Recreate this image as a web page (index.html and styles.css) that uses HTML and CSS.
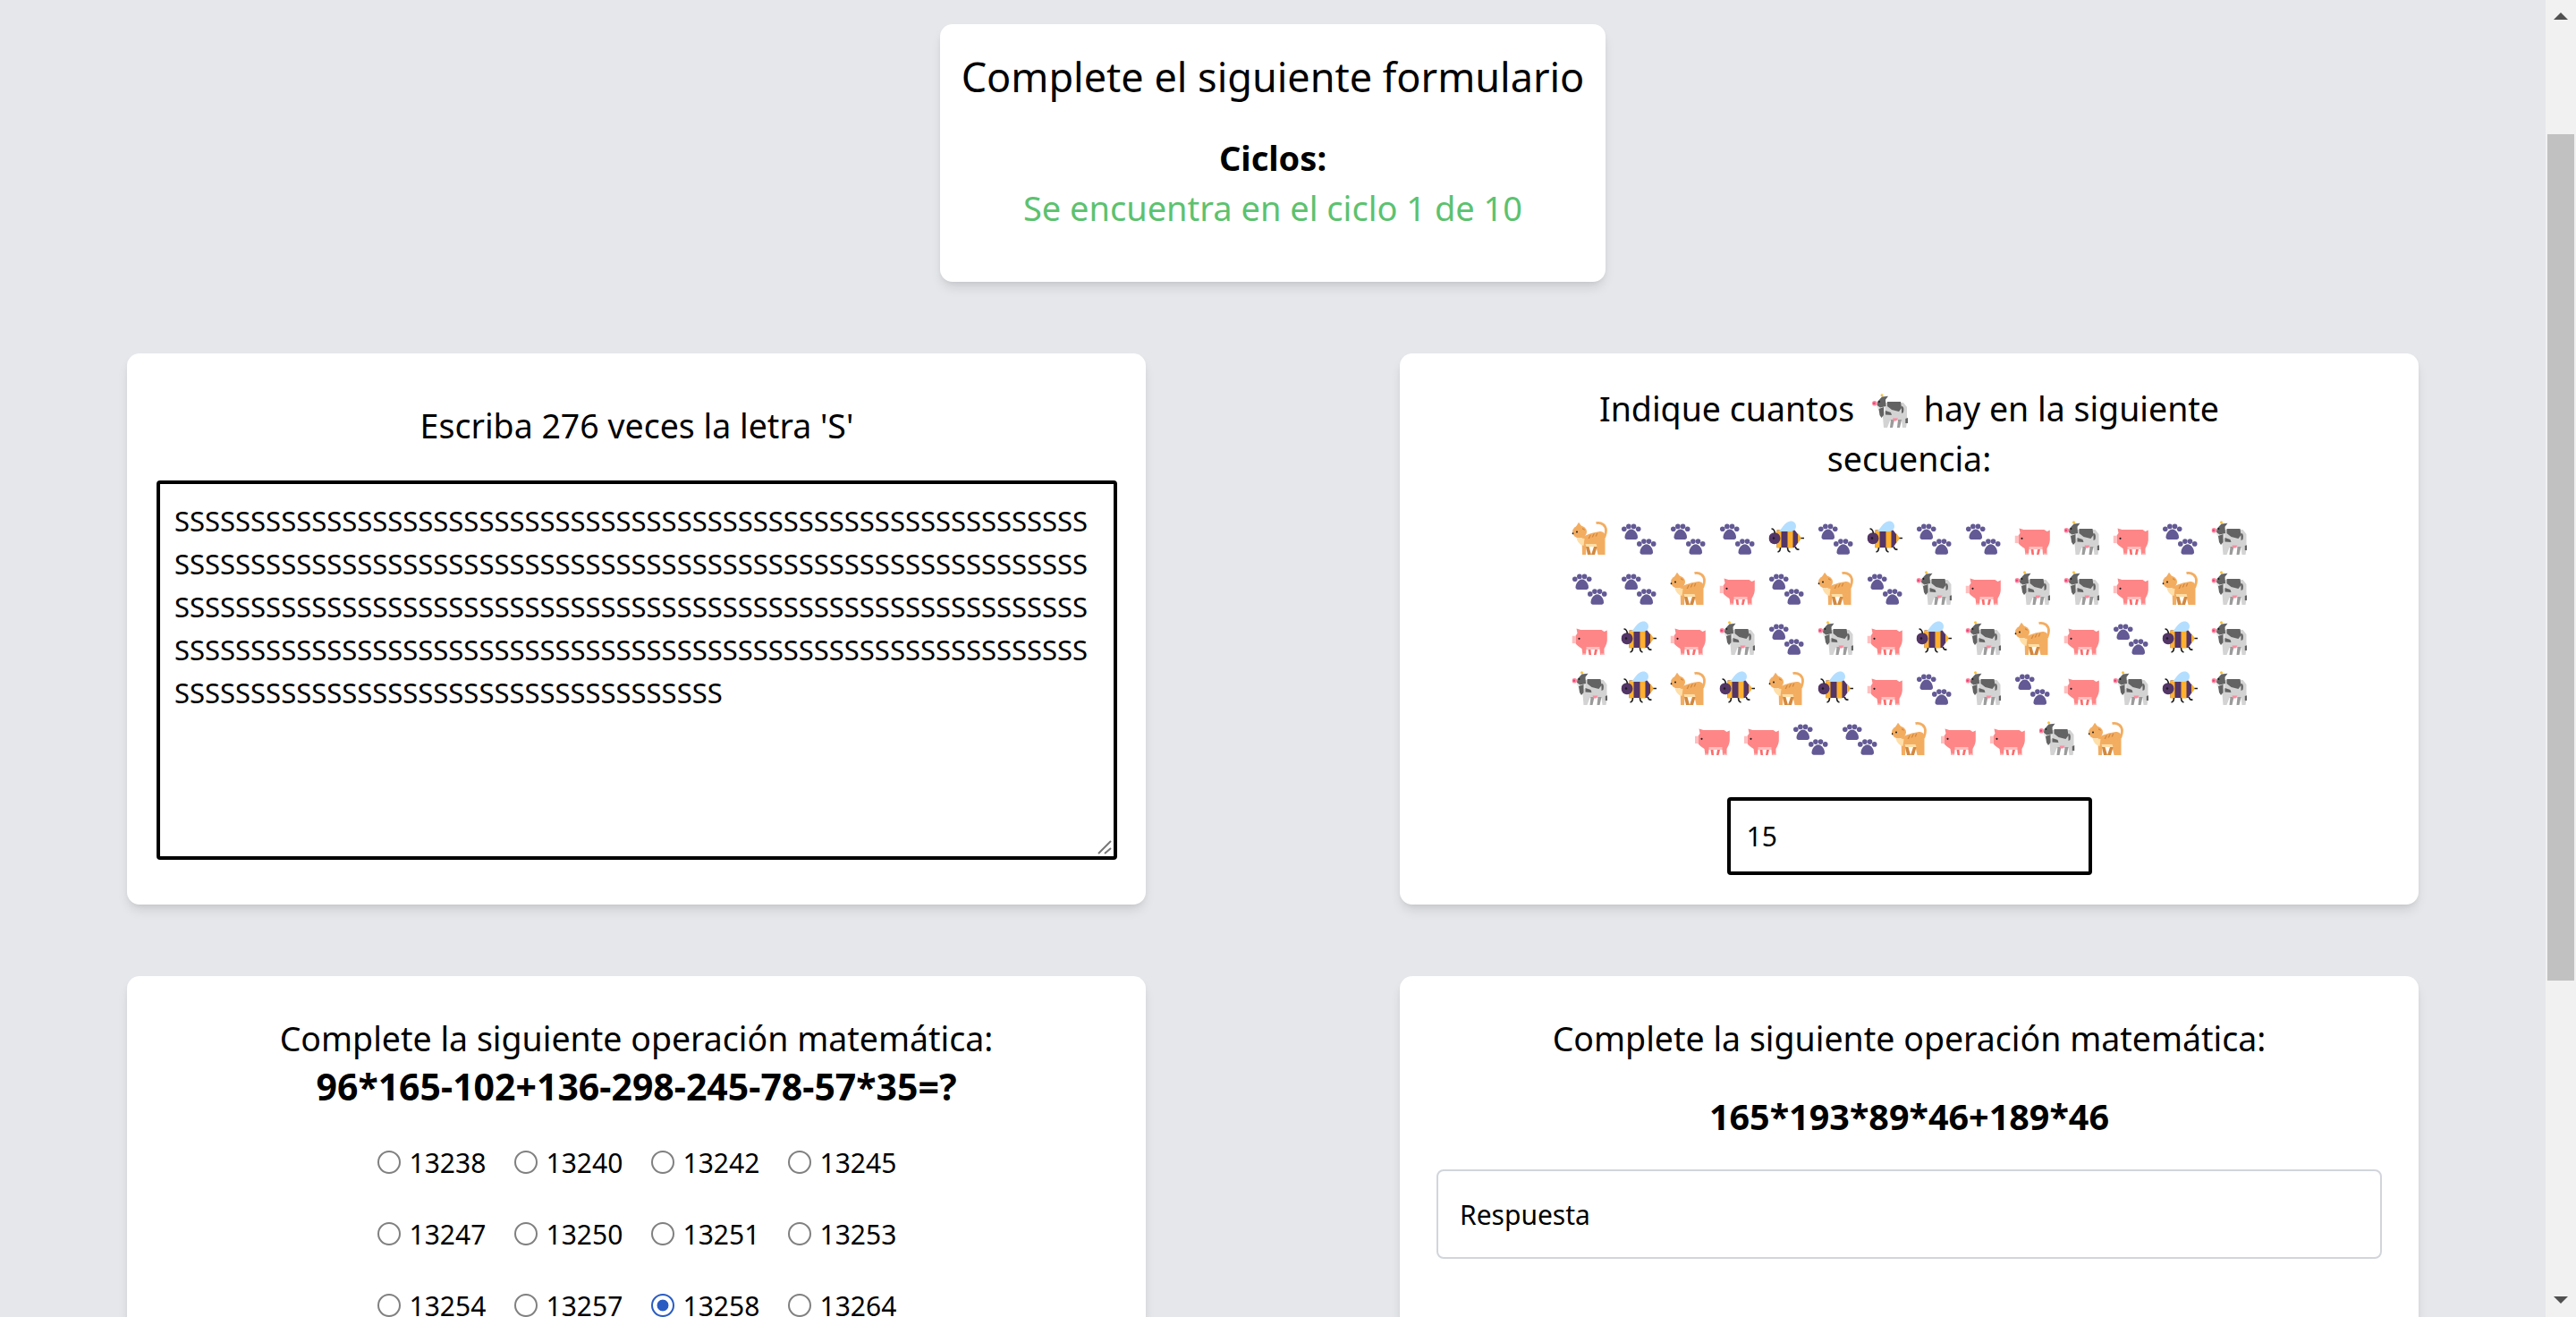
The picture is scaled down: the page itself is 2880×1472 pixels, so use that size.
FILE: index.html
```html
<!DOCTYPE html>
<html lang="es">
<head>
  <meta charset="UTF-8" />
  <meta name="viewport" content="width=device-width, initial-scale=1.0"/>
  <title>Formulario</title>
  <link rel="stylesheet" href="styles.css">
</head>
<body>
  <svg class="sprites" aria-hidden="true">
    <symbol id="cat" viewBox="0 0 40 40">
      <path d="M27 2.600C33 1.200 38 5.500 38 11c0 4-1.500 6-2 8" fill="none" stroke="#F3AD61" stroke-width="2.800"/>
      <path d="M11 19c5-4 13-6 20-7 4 0 6 2 6 6v20h-8l-2-9H16l-.5 9H11.500z" fill="#F3AD61"/>
      <path d="M3 9 7.500 1.700 13 9z" fill="#F3AD61"/>
      <ellipse cx="8.500" cy="12.500" rx="8" ry="7" fill="#F3AD61"/>
      <path d="M5 19c1 5 4 8 8 9l1-8z" fill="#FFDEA7"/>
      <path d="M15 26h12l1 3H16z" fill="#FFDEA7"/>
      <path d="M15.500 29H19l2.500 9H17.500zM24.500 29H28l-2.500 9h-4z" fill="#D3883E"/>
      <path d="M18 20l2-4 1.500-.5-2 4.500zM22 18.500l2-4 1.500-.5-2 4.500zM26 17.500l1.500-3.500 1.500-.5-1.500 4zM11.500 8l2.500 1.500.5 1.500-3-1.500z" fill="#D3883E"/>
      <circle cx="5.500" cy="12.500" r="1" fill="#1C1C1C"/>
      <circle cx=".9" cy="14.300" r="1" fill="#1C1C1C"/>
    </symbol>
    <symbol id="paw" viewBox="0 0 40 40">
      <g id="pawprint" fill="#635994">
        <circle cx="3.300" cy="9.200" r="2.800"/>
        <circle cx="8.400" cy="6.400" r="2.800"/>
        <circle cx="14" cy="6.400" r="2.800"/>
        <circle cx="19.200" cy="9.200" r="2.800"/>
        <path d="M11.300 9.500c4.200 0 7.200 5.500 7.200 9 0 2-1.500 2.500-3.500 2.500H7.500c-2 0-3.500-.5-3.500-2.500 0-3.500 3-9 7.300-9z"/>
      </g>
      <use href="#pawprint" x="17" y="16.700"/>
    </symbol>
    <symbol id="bee" viewBox="0 0 40 40">
      <path d="M9 10.500h20l7 9-7 10.500H9z" fill="#533566"/>
      <path d="M8.500 11 14 10v20.500H9zM21 10h6v20.500h-6zM32.500 14l4 5.500-4 5.500z" fill="#FFB02E"/>
      <circle cx="6.500" cy="19.700" r="6.500" fill="#533566"/>
      <path d="M11 12c4-3 6-10 13-11.500C28 0 30.500 3 30.500 6c0 4-3.500 6-7.500 6z" fill="#B4DEFF"/>
      <circle cx="5.500" cy="19.500" r="1.200" fill="#1C1C1C"/>
      <path d="M36 19.500h3.500M3 9c2 0 3.500 2 4 5M13 30c0 3-1 4.500-3 5M21 30c0 3 1 4.500 3 5M30 29c0 2 1 3.500 4 3" fill="none" stroke="#1C1C1C" stroke-width="1.600"/>
    </symbol>
    <symbol id="pig" viewBox="0 0 40 40">
      <path d="M18 32h3l.5 6h-2.500zM25.500 32h3l-1.500 6h-2.500z" fill="#FF6B6B"/>
      <path d="M5 8.500l5 1.500h23l3 2 3.300-1.500V22c-.3 4-2.300 7-3.300 9v7h-4.500l-.5-6H16l-.5 6H12l-1-7c-3-2-6-4-7-6v-8.300l2-3z" fill="#FF8687"/>
      <path d="M0 16.800h4V25H0zM16 29h15v3H16zM12.500 36.500H15.500V38H12.500zM32 36.500h4V38h-4z" fill="#FFBFBF"/>
      <circle cx="8" cy="19.800" r="1.100" fill="#1C1C1C"/>
    </symbol>
    <symbol id="cow" viewBox="0 0 40 40">
      <circle cx="11" cy="1.800" r="1.500" fill="#F9C23C"/>
      <path d="M13 10h22l4 5v17l-1 6h-4l-1-8H20l-3 8h-4l-1-12z" fill="#D3D3D3"/>
      <path d="M21 29h4l-2 9h-3zM29 29h4l-2 9h-3z" fill="#9B9B9B"/>
      <path d="M5 14l3 6h7V12z" fill="#E6E6E6"/>
      <path d="M6 9l5-5.500 7-.8-3 4 .5 7.300L9 15.500 5.500 13zM17 9h15l1 7-3 4-8-2-5-4zM7.500 17l5.500-2v9l-2.500 3-2-3zM15 19l6 2 1 3-7-.5zM33 14c2 0 3 2 2 7l-2 1zM37.300 28l2.700-1v6h-2.700z" fill="#636363"/>
      <path d="M23 27.500h6l-2 3h-3z" fill="#FF8AA0"/>
      <circle cx="2.800" cy="10.800" r="2.800" fill="#FF8AA0"/>
      <circle cx="2.300" cy="10.800" r="1.300" fill="#E8437B"/>
      <circle cx="8" cy="9" r=".9" fill="#1C1C1C"/>
    </symbol>
  </svg>

  <div class="window">
    <main class="page">
      <section class="card intro">
        <h1>Complete el siguiente formulario</h1>
        <h2>Ciclos:</h2>
        <p class="cycle">Se encuentra en el ciclo 1 de 10</p>
      </section>

      <div class="grid">
        <section class="card card-center">
          <p class="prompt prompt-gap">Escriba 276 veces la letra 'S'</p>
          <div class="answer-wrap">
            <textarea class="answer-area" id="letters"></textarea>
            <svg class="grip" viewBox="0 0 16 16"><path d="M1 15 15 1M8 15l7-6" fill="none" stroke="#777" stroke-width="2"/></svg>
          </div>
        </section>

        <section class="card card-count">
          <p class="prompt prompt-narrow">Indique cuantos <svg class="emoji-inline"><use href="#cow"/></svg> hay en la siguiente secuencia:</p>
          <div class="sequence">
            <svg class="emoji"><use href="#cat"/></svg><svg class="emoji"><use href="#paw"/></svg><svg class="emoji"><use href="#paw"/></svg><svg class="emoji"><use href="#paw"/></svg><svg class="emoji"><use href="#bee"/></svg><svg class="emoji"><use href="#paw"/></svg><svg class="emoji"><use href="#bee"/></svg><svg class="emoji"><use href="#paw"/></svg><svg class="emoji"><use href="#paw"/></svg><svg class="emoji"><use href="#pig"/></svg><svg class="emoji"><use href="#cow"/></svg><svg class="emoji"><use href="#pig"/></svg><svg class="emoji"><use href="#paw"/></svg><svg class="emoji"><use href="#cow"/></svg>
            <svg class="emoji"><use href="#paw"/></svg><svg class="emoji"><use href="#paw"/></svg><svg class="emoji"><use href="#cat"/></svg><svg class="emoji"><use href="#pig"/></svg><svg class="emoji"><use href="#paw"/></svg><svg class="emoji"><use href="#cat"/></svg><svg class="emoji"><use href="#paw"/></svg><svg class="emoji"><use href="#cow"/></svg><svg class="emoji"><use href="#pig"/></svg><svg class="emoji"><use href="#cow"/></svg><svg class="emoji"><use href="#cow"/></svg><svg class="emoji"><use href="#pig"/></svg><svg class="emoji"><use href="#cat"/></svg><svg class="emoji"><use href="#cow"/></svg>
            <svg class="emoji"><use href="#pig"/></svg><svg class="emoji"><use href="#bee"/></svg><svg class="emoji"><use href="#pig"/></svg><svg class="emoji"><use href="#cow"/></svg><svg class="emoji"><use href="#paw"/></svg><svg class="emoji"><use href="#cow"/></svg><svg class="emoji"><use href="#pig"/></svg><svg class="emoji"><use href="#bee"/></svg><svg class="emoji"><use href="#cow"/></svg><svg class="emoji"><use href="#cat"/></svg><svg class="emoji"><use href="#pig"/></svg><svg class="emoji"><use href="#paw"/></svg><svg class="emoji"><use href="#bee"/></svg><svg class="emoji"><use href="#cow"/></svg>
            <svg class="emoji"><use href="#cow"/></svg><svg class="emoji"><use href="#bee"/></svg><svg class="emoji"><use href="#cat"/></svg><svg class="emoji"><use href="#bee"/></svg><svg class="emoji"><use href="#cat"/></svg><svg class="emoji"><use href="#bee"/></svg><svg class="emoji"><use href="#pig"/></svg><svg class="emoji"><use href="#paw"/></svg><svg class="emoji"><use href="#cow"/></svg><svg class="emoji"><use href="#paw"/></svg><svg class="emoji"><use href="#pig"/></svg><svg class="emoji"><use href="#cow"/></svg><svg class="emoji"><use href="#bee"/></svg><svg class="emoji"><use href="#cow"/></svg>
            <svg class="emoji"><use href="#pig"/></svg><svg class="emoji"><use href="#pig"/></svg><svg class="emoji"><use href="#paw"/></svg><svg class="emoji"><use href="#paw"/></svg><svg class="emoji"><use href="#cat"/></svg><svg class="emoji"><use href="#pig"/></svg><svg class="emoji"><use href="#pig"/></svg><svg class="emoji"><use href="#cow"/></svg><svg class="emoji"><use href="#cat"/></svg>
          </div>
          <input class="count-input" type="number" value="15">
        </section>

        <section class="card card-math">
          <p class="prompt">Complete la siguiente operación matemática:</p>
          <p class="operation operation-tight">96*165-102+136-298-245-78-57*35=?</p>
          <div class="options">
            <label class="option"><input type="radio" name="op1"> 13238</label>
            <label class="option"><input type="radio" name="op1"> 13240</label>
            <label class="option"><input type="radio" name="op1"> 13242</label>
            <label class="option"><input type="radio" name="op1"> 13245</label>
            <label class="option"><input type="radio" name="op1"> 13247</label>
            <label class="option"><input type="radio" name="op1"> 13250</label>
            <label class="option"><input type="radio" name="op1"> 13251</label>
            <label class="option"><input type="radio" name="op1"> 13253</label>
            <label class="option"><input type="radio" name="op1"> 13254</label>
            <label class="option"><input type="radio" name="op1"> 13257</label>
            <label class="option"><input type="radio" name="op1" checked> 13258</label>
            <label class="option"><input type="radio" name="op1"> 13264</label>
          </div>
        </section>

        <section class="card card-math">
          <p class="prompt">Complete la siguiente operación matemática:</p>
          <p class="operation operation-gap">165*193*89*46+189*46</p>
          <input class="text-input" type="text" placeholder="Respuesta">
        </section>
      </div>
    </main>

    <div class="scrollbar">
      <span class="arrow-up"></span>
      <span class="thumb"></span>
      <span class="arrow-down"></span>
    </div>
  </div>

  <script>
    document.getElementById("letters").value = "S".repeat(276);
  </script>
</body>
</html>
```

FILE: styles.css
```css
* { box-sizing: border-box; }
html, body {
  margin: 0;
  height: 100vh;
  overflow: hidden;
}
body {
  font-family: "Noto Sans", "Open Sans", sans-serif;
  font-size: 30px;
  color: #000;
  background-color: #e5e7eb;
}
.sprites { display: none; }
.window {
  display: flex;
  height: 100%;
}
.page {
  flex: 1;
  min-width: 0;
  height: 100%;
  overflow: hidden;
  padding: 27px 142px 0;
}
.card {
  background-color: #fff;
  border-radius: 14px;
  box-shadow: 0 8px 14px -3px rgba(0, 0, 0, 0.12), 0 3px 6px -2px rgba(0, 0, 0, 0.06);
}
.intro {
  width: 744px;
  height: 288px;
  margin: 0 auto;
  padding-top: 27px;
  text-align: center;
}
.intro h1 {
  margin: 0;
  font-size: 45px;
  font-weight: 400;
  line-height: 64px;
}
.intro h2 {
  margin: 30px 0 0;
  font-size: 38px;
  font-weight: 700;
  line-height: 56px;
}
.cycle {
  margin: 0;
  font-size: 38px;
  line-height: 56px;
  color: #5cc26f;
}
.grid {
  display: grid;
  grid-template-columns: 1139px 1139px;
  column-gap: 284px;
  row-gap: 80px;
  margin-top: 80px;
}
.card-center {
  display: flex;
  flex-direction: column;
  justify-content: flex-end;
  padding: 0 32px 50px 33px;
}
.card-count {
  padding: 34px 33px 33px;
  text-align: center;
}
.card-math {
  height: 700px;
  padding: 42px 40px 0;
  text-align: center;
}
.prompt {
  margin: 0;
  font-size: 37.500px;
  line-height: 56px;
  text-align: center;
}
.prompt-gap { margin-bottom: 33px; }
.prompt-narrow {
  width: 760px;
  margin: 0 auto;
}
.answer-wrap { position: relative; }
.answer-area {
  display: block;
  width: 100%;
  height: 424px;
  padding: 17px 16px 16px;
  border: 4px solid #000;
  border-radius: 4px;
  font: inherit;
  font-size: 31px;
  line-height: 48px;
  color: #000;
  outline: none;
  resize: none;
}
.grip {
  position: absolute;
  right: 6px;
  bottom: 6px;
  width: 16px;
  height: 16px;
  pointer-events: none;
}
.emoji-inline {
  width: 42px;
  height: 40px;
  margin: 0 7px 0 9px;
  vertical-align: -9px;
}
.sequence {
  display: flex;
  flex-wrap: wrap;
  justify-content: center;
  width: 770px;
  margin: 32px auto 0;
}
.emoji {
  width: 55px;
  height: 56px;
  padding: 9px 7.500px 7px;
}
.count-input {
  display: block;
  width: 408px;
  height: 87px;
  margin: 38px auto 0;
  padding: 0 18px;
  border: 4px solid #000;
  border-radius: 4px;
  font: inherit;
  outline: none;
  appearance: textfield;
}
.operation {
  margin: 0;
  font-weight: 700;
  line-height: 56px;
}
.operation-tight {
  margin-top: -3px;
  font-size: 41px;
}
.operation-gap {
  margin-top: 31px;
  font-size: 39.500px;
}
.options {
  display: grid;
  grid-template-columns: repeat(4, 121px);
  column-gap: 32px;
  grid-auto-rows: 80px;
  justify-content: center;
  margin-top: 17px;
}
.option {
  display: flex;
  align-items: center;
  gap: 10px;
  white-space: nowrap;
}
.option input {
  appearance: none;
  width: 26px;
  height: 26px;
  margin: 0;
  flex: none;
  border: 2px solid #808080;
  border-radius: 50%;
  background-color: #fff;
}
.option input:checked {
  border: 2.500px solid #2a5cc2;
  background-image: radial-gradient(circle, #2a5cc2 0, #2a5cc2 6px, #fff 6.800px);
}
.text-input {
  display: block;
  width: 1057px;
  height: 100px;
  margin: 31px auto 0;
  padding: 0 24px;
  border: 2px solid #d1d5db;
  border-radius: 8px;
  font: inherit;
  outline: none;
}
.text-input::placeholder {
  color: #000;
  opacity: 1;
}
.scrollbar {
  flex: none;
  width: 34px;
  height: 100%;
  display: flex;
  flex-direction: column;
  align-items: center;
  background-color: #f1f1f1;
  padding: 14px 0 15px;
}
.arrow-up, .arrow-down {
  width: 0;
  height: 0;
  border-left: 8px solid transparent;
  border-right: 8px solid transparent;
}
.arrow-up { border-bottom: 8px solid #505050; }
.arrow-down { border-top: 8px solid #505050; }
.thumb {
  width: 30px;
  height: 946px;
  margin: 128px 0 auto;
  background-color: #c1c1c1;
}
```
